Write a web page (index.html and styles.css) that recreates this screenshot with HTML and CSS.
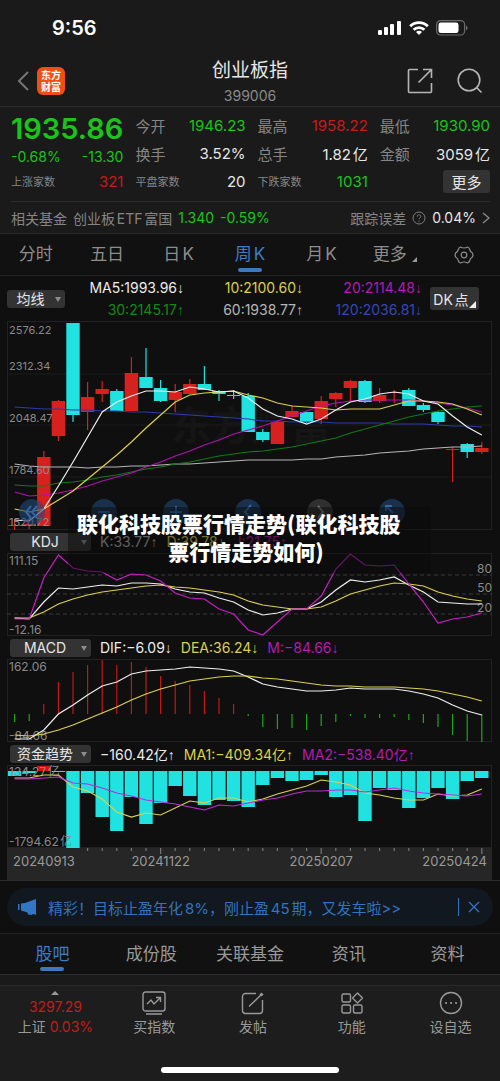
FILE: index.html
```html
<!DOCTYPE html>
<html lang="zh-CN">
    <head>
        <meta charset="UTF-8">
        <meta name="viewport" content="width=device-width, initial-scale=1.0">
        <title>创业板指 399006</title>
        <link rel="stylesheet" href="styles.css">
    </head>

    <body>
        <div class="status-bar">
            <span class="clock">9:56</span>
            <div class="status-icons">
                <svg width="24" height="16" viewBox="0 0 24 16" fill="#fff">
                    <rect x="0" y="10" width="4" height="5" rx="1"/>
                    <rect x="6" y="7" width="4" height="8" rx="1"/>
                    <rect x="12" y="4" width="4" height="11" rx="1"/>
                    <rect x="19" y="1" width="4" height="14" rx="1"/>
                </svg>
                <svg width="20" height="16" viewBox="0 0 20 16" fill="none" stroke="#fff" stroke-width="2.8">
                    <path d="M1.2 6.2a12.4 12.4 0 0 1 17.6 0"/>
                    <path d="M4.6 9.8a7.6 7.6 0 0 1 10.8 0"/>
                    <path d="M10 15l-3-3a4.2 4.2 0 0 1 6 0z" fill="#fff" stroke="none"/>
                </svg>
                <svg width="32" height="16" viewBox="0 0 32 16">
                    <rect x="0.6" y="0.6" width="28" height="14.4" rx="4" fill="none" stroke="#6b6b6b" stroke-width="1.2"/>
                    <rect x="2.5" y="2.5" width="20" height="10.6" rx="2.4" fill="#fff"/>
                    <path d="M30 5.4c2 .8 2 4 0 4.8z" fill="#6b6b6b"/>
                </svg>
            </div>
        </div>

        <header class="top-bar">
            <div class="top-side">
                <button class="icon-btn" aria-label="返回">
                    <svg width="12" height="20" viewBox="0 0 12 20" fill="none" stroke="#757575" stroke-width="2"><path d="M11 1L2 10l9 9"/></svg>
                </button>
                <a class="logo" href="#">东方<br>财富</a>
            </div>
            <div class="top-title">
                <h1>创业板指</h1>
                <p>399006</p>
            </div>
            <div class="top-side top-right">
                <button class="icon-btn" aria-label="分享">
                    <svg width="26" height="26" viewBox="0 0 26 26" fill="none" stroke="#b5b5b5" stroke-width="1.6"><path d="M11 1.500H2.500a1 1 0 0 0-1 1v21a1 1 0 0 0 1 1h21a1 1 0 0 0 1-1V15M16 1.500h8.500V10M24.500 1.500L11.500 14.500"/></svg>
                </button>
                <button class="icon-btn" aria-label="搜索">
                    <svg width="26" height="26" viewBox="0 0 26 26" fill="none" stroke="#b5b5b5" stroke-width="1.6"><circle cx="12" cy="12" r="10.800"/><path d="M19.500 19.500l5 5"/></svg>
                </button>
            </div>
        </header>

        <section class="quote">
            <div class="quote-grid">
                <div class="col">
                    <div class="row price down">1935.86</div>
                    <div class="row change down"><span>-0.68%</span><span>-13.30</span></div>
                    <div class="row"><span class="small">上涨家数</span><span class="up">321</span></div>
                </div>
                <div class="col">
                    <div class="row"><span class="label">今开</span><span class="down">1946.23</span></div>
                    <div class="row"><span class="label">换手</span><span>3.52%</span></div>
                    <div class="row"><span class="small">平盘家数</span><span>20</span></div>
                </div>
                <div class="col">
                    <div class="row"><span class="label">最高</span><span class="up">1958.22</span></div>
                    <div class="row"><span class="label">总手</span><span>1.82亿</span></div>
                    <div class="row"><span class="small">下跌家数</span><span class="down">1031</span></div>
                </div>
                <div class="col">
                    <div class="row"><span class="label">最低</span><span class="down">1930.90</span></div>
                    <div class="row"><span class="label">金额</span><span>3059亿</span></div>
                    <div class="row row-end"><button class="more">更多</button></div>
                </div>
            </div>
            <div class="related">
                <span>相关基金</span>
                <span>创业板ETF富国</span>
                <span class="down">1.340</span>
                <span class="down">-0.59%</span>
                <span class="push">跟踪误差</span>
                <svg width="14" height="14" viewBox="0 0 14 14" fill="none" stroke="#7d7d7d"><circle cx="7" cy="7" r="6"/><path d="M5.200 5.600c0-2.400 3.600-2.400 3.600 0 0 1.300-1.800 1.300-1.800 2.700M7 9.500v1.200"/></svg>
                <span class="white">0.04%</span>
                <svg width="8" height="12" viewBox="0 0 8 12" fill="none" stroke="#8a8a8a" stroke-width="1.400"><path d="M1 1l6 5-6 5"/></svg>
            </div>
        </section>

        <nav class="period-tabs">
            <a href="#">分时</a>
            <a href="#">五日</a>
            <a href="#">日K</a>
            <a href="#" class="active">周K</a>
            <a href="#">月K</a>
            <a href="#" class="has-corner">更多</a>
            <button class="icon-btn" aria-label="设置">
                <svg width="20" height="20" viewBox="0 0 20 20" fill="none" stroke="#8c8c8c" stroke-width="1.200" stroke-linejoin="round"><path d="M6.500 2Q10 4 13.500 2Q15.200 2.400 15.700 4.500Q16.200 6.800 18.400 8Q19.400 10 18.400 12Q16.200 13.200 15.700 15.500Q15.200 17.600 13.500 18Q10 16 6.500 18Q4.800 17.600 4.300 15.500Q3.800 13.200 1.600 12Q.6 10 1.600 8Q3.800 6.800 4.300 4.500Q4.800 2.400 6.500 2z"/><circle cx="10" cy="10" r="2.800"/></svg>
            </button>
        </nav>

        <main class="charts">
            <div class="ma-row">
                <div class="picker picker-small">
                    <select aria-label="主图指标"><option>均线</option></select>
                </div>
                <div class="ma-values">
                    <span class="c-white">MA5:1993.96<i>↓</i></span>
                    <span class="c-yellow">10:2100.60<i>↓</i></span>
                    <span class="c-pink">20:2114.48<i>↓</i></span>
                    <span class="c-green">30:2145.17<i>↑</i></span>
                    <span class="c-grey">60:1938.77<i>↑</i></span>
                    <span class="c-blue">120:2036.81<i>↓</i></span>
                </div>
                <button class="dk">DK点</button>
            </div>

            <div class="panel">
                <svg id="kline" class="chart" viewBox="0 0 485 209"></svg>
                <div class="chart-tools">
                    <button aria-label="最左"><svg viewBox="0 0 26 26"><path d="M12 7l-5 6 5 6M18 7l-5 6 5 6"/></svg></button>
                    <button aria-label="缩小"><svg viewBox="0 0 26 26"><path d="M7 13h12"/></svg></button>
                    <button aria-label="放大"><svg viewBox="0 0 26 26"><path d="M7 13h12M13 7v12"/></svg></button>
                    <button aria-label="左移"><svg viewBox="0 0 26 26"><path d="M16 6l-6 7 6 7"/></svg></button>
                    <button aria-label="右移" class="off"><svg viewBox="0 0 26 26"><path d="M11 7l5 6-5 6"/></svg></button>
                    <button aria-label="全屏"><svg viewBox="0 0 26 26"><path d="M7 12V7h6M7 7l7 7"/></svg></button>
                </div>
            </div>

            <div class="panel">
                <div class="panel-head">
                    <div class="picker"><select aria-label="副图一"><option>KDJ</option></select></div>
                    <span class="c-grey">K:33.77<i>↑</i></span>
                    <span class="c-yellow">D:39.78<i>↓</i></span>
                    <span class="c-pink">J:21.75<i>↑</i></span>
                </div>
                <svg id="kdj" class="chart" viewBox="0 0 485 83"></svg>
                <p class="caption">联化科技股票行情走势(联化科技股票行情走势如何)</p>
            </div>

            <div class="panel">
                <div class="panel-head">
                    <div class="picker"><select aria-label="副图二"><option>MACD</option></select></div>
                    <span class="c-white">DIF:−6.09<i>↓</i></span>
                    <span class="c-yellow">DEA:36.24<i>↓</i></span>
                    <span class="c-pink">M:−84.66<i>↓</i></span>
                </div>
                <svg id="macd" class="chart" viewBox="0 0 485 83"></svg>
            </div>

            <div class="panel">
                <div class="panel-head">
                    <div class="picker"><select aria-label="副图三"><option>资金趋势</option></select></div>
                    <span class="c-white">−160.42亿<i>↑</i></span>
                    <span class="c-yellow">MA1:−409.34亿<i>↑</i></span>
                    <span class="c-pink">MA2:−538.40亿<i>↑</i></span>
                </div>
                <svg id="fund" class="chart" viewBox="0 0 485 83"></svg>
                <svg id="axis" class="chart axis" viewBox="0 0 485 32"></svg>
            </div>
        </main>

        <div class="promo-wrap">
            <div class="promo">
                <svg width="20" height="16" viewBox="0 0 20 16" fill="#3377c4"><path d="M0 5h1.500v6H0zM3 4.500l4-.5 11-4v16l-3-1.200-1 1.200-4-.5-.5-2L3 11.500z"/></svg>
                <a href="#">精彩！目标止盈年化8%，刚止盈45期，又发车啦&gt;&gt;</a>
                <button class="icon-btn" aria-label="关闭">
                    <svg width="12" height="12" viewBox="0 0 12 12" stroke="#3377c4" stroke-width="1.300"><path d="M1 1l10 10M11 1L1 11"/></svg>
                </button>
            </div>
        </div>

        <nav class="info-tabs">
            <a href="#" class="active">股吧</a>
            <a href="#">成份股</a>
            <a href="#">关联基金</a>
            <a href="#">资讯</a>
            <a href="#">资料</a>
        </nav>

        <footer class="bottom-bar">
            <div class="bottom-items">
                <a href="#" class="index">
                    <svg width="8" height="4" viewBox="0 0 8 4" fill="#999"><path d="M0 4l4-4 4 4z"/></svg>
                    <span class="up">3297.29</span>
                    <span>上证 <b class="up">0.03%</b></span>
                </a>
                <a href="#">
                    <svg width="24" height="24" viewBox="0 0 24 24"><rect x="1" y="1" width="22" height="19" rx="2.500"/><path d="M4 23h16M5 13l4-4 3 4 6-6M14 6.500h4.500V11"/></svg>
                    <span>买指数</span>
                </a>
                <a href="#">
                    <svg width="24" height="24" viewBox="0 0 24 24"><path d="M15 2.500H4.500a3 3 0 0 0-3 3v14a3 3 0 0 0 3 3h14a3 3 0 0 0 3-3V9M8 15.500L20.500 3.500" /><path d="M19.500 4.500l2-2" stroke-width="3"/></svg>
                    <span>发帖</span>
                </a>
                <a href="#">
                    <svg width="24" height="24" viewBox="0 0 24 24"><rect x="2" y="3" width="8.500" height="8" rx="1.500"/><rect x="2" y="14" width="8.500" height="8" rx="1.500"/><rect x="13.500" y="14" width="8.500" height="8" rx="1.500"/><path d="M17.500 2l5 5-5 5-5-5z" stroke-linejoin="round"/></svg>
                    <span>功能</span>
                </a>
                <a href="#">
                    <svg width="24" height="24" viewBox="0 0 24 24"><circle cx="12" cy="12" r="10.500"/><path d="M7 12h.1M12 12h.1M17 12h.1" stroke-width="2" stroke-linecap="round"/></svg>
                    <span>设自选</span>
                </a>
            </div>
            <div class="home-bar"></div>
        </footer>

        <script>
            const STEP = 14.6;
            const FIRST = 7.6;
            const BAR = 13.4;
            const RED = '#d7211f';
            const CYAN = '#20e2e0';

            const x = i => FIRST + i * STEP;

            function line(ys, color) {
                const points = ys.map((y, i) => `${x(i).toFixed(1)},${y}`).join(' ');
                return `<polyline points="${points}" fill="none" stroke="${color}" stroke-width="1.2"/>`;
            }

            function rect(i, top, bottom, color) {
                return `<rect x="${(x(i) - BAR / 2).toFixed(1)}" y="${top}" width="${BAR}" height="${bottom - top}" fill="${color}"/>`;
            }

            function stick(i, top, bottom, color) {
                return `<line x1="${x(i).toFixed(1)}" x2="${x(i).toFixed(1)}" y1="${top}" y2="${bottom}" stroke="${color}" stroke-width="1.2"/>`;
            }

            function label(px, y, text, cls = '') {
                return `<text x="${px}" y="${y}" class="${cls}">${text}</text>`;
            }

            function rule(y, cls) {
                return `<line x1="0" x2="485" y1="${y}" y2="${y}" class="${cls}"/>`;
            }

            function frame(h) {
                return `<rect x="0.5" y="0.5" width="484" height="${h - 1}" class="frame"/>`;
            }

            // top, bottom, high, low, rising
            const candles = [
                [204, 205, 198, 209, 1], [203, 205, 203, 208, 1], [136, 205, 130, 205, 1], [80, 115, 79, 120, 1],
                [2, 94, 2, 101, 0], [76, 91, 61, 109, 1], [68, 73, 60, 81, 1], [70, 90, 68, 90, 0],
                [52, 90, 36, 90, 1], [56, 67, 27, 67, 0], [67, 80, 59, 81, 0], [71, 79, 63, 91, 1],
                [63, 73, 58, 73, 1], [63, 69, 45, 69, 0], [70, 73, 69, 80, 0], [74, 75, 69, 78, 0],
                [75, 111, 72, 111, 0], [111, 119, 108, 121, 0], [101, 123, 99, 123, 1], [90, 96, 84, 96, 1],
                [91, 101, 91, 102, 0], [80, 98, 75, 103, 1], [72, 78, 71, 86, 1], [60, 67, 59, 80, 1],
                [60, 81, 59, 82, 0], [74, 80, 67, 82, 1], [71, 72, 69, 82, 1], [69, 85, 67, 85, 0],
                [84, 89, 82, 91, 0], [91, 101, 90, 103, 0], [128, 129, 126, 161, 1], [123, 131, 122, 137, 0],
                [127, 131, 121, 133, 1]
            ];

            const ma = [
                ['#2b3bb0', [86,87,88,88,89,89,90,90,91,91,92,93,94,95,96,97,98,100,100,101,101,101,102,102,102,102,103,103,103,104,105,105,106]],
                ['#b5b5b5', [143,145,146,146,146,147,146,146,145,145,144,143,143,142,141,140,139,139,139,139,138,138,136,135,134,132,131,130,128,127,126,126,125]],
                ['#107a14', [164,165,165,162,161,159,156,154,151,148,146,143,141,138,135,133,131,130,128,126,123,120,117,112,108,104,100,96,93,90,88,86,85]],
                ['#b010b0', [171,175,174,172,169,165,160,156,152,146,141,135,130,124,119,113,109,105,100,95,90,85,82,80,79,79,79,79,80,82,84,87,91]],
                ['#ded04c', [188,191,188,179,170,158,146,134,121,107,94,81,74,72,71,70,74,77,82,85,86,87,89,88,88,88,84,80,80,81,83,88,94]],
                ['#f0f0f0', [199,200,188,165,141,116,91,81,75,70,70,71,66,68,71,70,77,88,95,98,103,98,89,81,78,73,71,73,80,83,95,106,114]]
            ];

            let kline = frame(209) + rule(53, 'grid') + rule(104, 'grid') + rule(156, 'grid');
            kline += label(164, 119, '东方财富', 'watermark');
            candles.forEach(([top, bottom, high, low, rising], i) => {
                const color = rising ? RED : CYAN;
                kline += stick(i, high, low, color) + rect(i, top, bottom, color);
            });
            ma.forEach(([color, ys]) => kline += line(ys, color));
            kline += label(2, 13, '2576.22', 'price-label') + label(2, 49, '2312.34', 'price-label');
            kline += label(2, 101, '2048.47', 'price-label') + label(2, 153, '1784.60', 'price-label');
            kline += label(2, 205, '1520.72', 'price-label');
            document.getElementById('kline').innerHTML = kline;

            let kdj = frame(83) + rule(22, 'dash') + rule(41, 'dash') + rule(61, 'dash');
            kdj += label(2, 12, '111.15') + label(2, 81, '-12.16');
            kdj += label(485, 20, '80', 'end') + label(485, 39, '50', 'end') + label(485, 59, '20', 'end');
            kdj += line([65,66,49,35,36,34,32,33,30,30,31,36,39,40,45,49,57,62,60,56,56,49,37,27,29,27,24,32,39,49,50,51,51], '#f0f0f0');
            kdj += line([65,65,59,51,46,42,39,37,35,33,32,34,35,37,39,42,48,52,54,56,56,54,48,41,37,33,30,31,33,39,43,46,48], '#ded04c');
            kdj += line([66,66,25,2,15,18,19,27,21,22,28,40,45,46,56,61,77,82,69,56,56,43,16,1,12,13,12,31,49,70,66,64,60], '#c81ec8');
            document.getElementById('kdj').innerHTML = kdj;

            const ZERO = 55;
            let macd = frame(83);
            [63,62,45,23,13,6,1,6,3,8,17,22,26,32,39,45,57,68,70,69,71,67,63,57,59,59,58,61,64,68,76,82,83].forEach((y, i) => {
                macd += stick(i, Math.min(y, ZERO), Math.max(y, ZERO), y < ZERO ? '#c01818' : '#1fa51f');
            });
            macd += label(2, 12, '162.06') + label(2, 81, '-84.66');
            macd += line([80,80,71,55,46,36,27,23,15,12,11,10,8,9,10,12,18,25,28,30,32,32,31,29,30,30,30,32,35,39,46,52,56], '#f0f0f0');
            macd += line([76,77,75,71,66,60,54,48,41,35,30,26,22,20,18,17,17,19,20,22,24,26,27,27,28,28,28,29,30,32,35,38,42], '#ded04c');
            document.getElementById('macd').innerHTML = macd;

            let fund = frame(83);
            [11,8,1,7,83,28,52,66,32,59,38,21,31,40,35,36,42,20,13,16,15,10,32,30,56,23,25,43,33,23,34,16,13].forEach((y, i) => {
                fund += y < 6 ? rect(i, y, 6, '#e01010') : rect(i, 6, y, CYAN);
            });
            fund += label(2, 11, '134.27亿') + label(2, 81, '-1794.62亿');
            fund += line([13,13,10,10,22,26,34,47,52,48,50,43,36,38,33,33,37,34,29,25,21,15,17,20,28,30,33,35,35,29,31,30,24], '#ded04c');
            fund += line([14,14,13,12,18,19,23,28,31,35,37,39,42,45,40,41,38,35,33,29,26,26,25,25,27,25,23,26,28,29,30,31,29], '#c02ad8');
            document.getElementById('fund').innerHTML = fund;

            let axis = '';
            for (let i = 5; i < 33; i++) {
                axis += stick(i, 0, (i + 1) % 11 === 0 ? 6 : 3, '#777');
            }
            axis += label(6, 18, '20240913') + label(x(10), 18, '20241122', 'mid');
            axis += label(x(21), 18, '20250207', 'mid') + label(480, 18, '20250424', 'end');
            document.getElementById('axis').innerHTML = axis;
        </script>
    </body>
</html>
```
FILE: styles.css
```css
* {
    box-sizing: border-box;
}
body {
    margin: 0;
    background: #1a1a1a;
    color: #e6e6e6;
    font-family: Inter, "Noto Sans CJK SC", sans-serif;
    font-size: 14px;
    text-autospace: normal;
}
a {
    color: inherit;
    text-decoration: none;
}
button, select {
    font: inherit;
    color: inherit;
    border: none;
    padding: 0;
    margin: 0;
    cursor: pointer;
}
svg {
    display: block;
}
i, b {
    font-style: normal;
    font-weight: 400;
}
.icon-btn {
    background: none;
    display: flex;
    align-items: center;
    justify-content: center;
}
.up {
    color: #c81a1a;
}
.down {
    color: #1ac41a;
}

/* status bar + title */
.status-bar {
    height: 56px;
    padding: 0 32px 0 52px;
    display: flex;
    align-items: center;
    justify-content: space-between;
}
.clock {
    color: #fff;
    font-size: 20px;
    font-weight: 600;
}
.status-icons {
    display: flex;
    gap: 7px;
}
.top-bar {
    height: 51px;
    padding: 0 17px;
    display: flex;
    justify-content: space-between;
    align-items: center;
    border-bottom: 1px solid #2b2b2b;
}
.top-side {
    width: 76px;
    display: flex;
    align-items: center;
    gap: 8px;
}
.top-right {
    justify-content: flex-end;
    gap: 24px;
}
.logo {
    width: 28px;
    height: 28px;
    padding-top: 2px;
    border-radius: 6px;
    background: #f04e12;
    color: #fff;
    font-size: 10px;
    font-weight: 700;
    line-height: 12px;
    text-align: center;
}
.top-title {
    text-align: center;
}
.top-title h1 {
    margin: 0;
    font-size: 19px;
    font-weight: 400;
    line-height: 30px;
}
.top-title p {
    margin: 0;
    color: #8a8a8a;
    line-height: 20px;
}

/* quote */
.quote {
    padding: 4px 10px 0 11px;
    border-bottom: 1px solid #262626;
}
.quote-grid {
    display: grid;
    grid-template-columns: repeat(4, 1fr);
    gap: 12px;
    height: 90px;
    font-size: 15px;
}
.row {
    height: 28px;
    display: flex;
    align-items: center;
    justify-content: space-between;
}
.row-end {
    justify-content: flex-end;
}
.price {
    height: 34px;
    font-size: 29px;
    font-weight: 600;
}
.change {
    height: 22px;
    font-size: 14px;
}
.label {
    color: #858585;
}
.small {
    font-size: 11px;
    color: #858585;
}
.more {
    width: 47px;
    height: 23px;
    border-radius: 3px;
    background: #333;
}
.related {
    height: 32px;
    border-top: 1px solid #2b2b2b;
    display: flex;
    align-items: center;
    gap: 6px;
    color: #858585;
    white-space: nowrap;
}
.push {
    margin-left: auto;
}
.white {
    color: #e6e6e6;
}

/* period tabs */
.period-tabs {
    height: 42px;
    display: grid;
    grid-template-columns: repeat(7, 1fr);
    background: #111;
    border-bottom: 1px solid #222;
    color: #8c8c8c;
    font-size: 17px;
    line-height: 40px;
    text-align: center;
}
.period-tabs a, .info-tabs a {
    position: relative;
}
.period-tabs .has-corner {
    padding-right: 6px;
}
.active {
    color: #3c7cc8;
}
.active::after {
    content: "";
    position: absolute;
    left: 50%;
    bottom: 3px;
    width: 24px;
    height: 4px;
    margin-left: -12px;
    border-radius: 2px;
    background: #3f78bd;
}
.has-corner::after {
    content: "";
    position: absolute;
    right: 12px;
    bottom: 13px;
    border-left: 5px solid transparent;
    border-bottom: 5px solid #999;
}

/* charts */
.charts {
    background: #0f0f0f;
    padding: 0 8px 0 7px;
}
.c-white { color: #ececec; }
.c-grey { color: #b5b5b5; }
.c-yellow { color: #ded04c; }
.c-pink { color: #b41ab4; }
.c-green { color: #128a16; }
.c-blue { color: #3846b8; }
.ma-row {
    height: 45px;
    display: flex;
    align-items: center;
    padding-right: 13px;
}
.ma-values {
    flex: 1;
    display: grid;
    grid-template-columns: repeat(3, 1fr);
    margin-right: 8px;
    line-height: 22px;
    text-align: right;
}
.ma-values i, .panel-head i {
    font-family: "Liberation Sans", sans-serif;
    line-height: 1;
}
.picker {
    position: relative;
    width: 81px;
    height: 18px;
}
.picker select {
    appearance: none;
    width: 100%;
    height: 100%;
    padding-right: 11px;
    border-radius: 3px;
    background: #333;
    line-height: 18px;
    text-align-last: center;
}
.picker::after {
    content: "";
    position: absolute;
    right: 4px;
    top: 7px;
    border: 3px solid transparent;
    border-top: 5px solid #8c8c8c;
    border-bottom: none;
}
.picker-small {
    width: 58px;
}
.dk {
    position: relative;
    width: 49px;
    height: 23px;
    padding-right: 7px;
    border-radius: 3px;
    background: #333;
}
.dk::after {
    content: "";
    position: absolute;
    right: 3px;
    bottom: 2px;
    border-left: 7px solid transparent;
    border-bottom: 7px solid #eee;
}
.panel {
    position: relative;
}
.panel-head {
    height: 23px;
    padding-left: 3px;
    display: flex;
    align-items: center;
    gap: 9px;
    white-space: nowrap;
    text-autospace: no-autospace;
}
.chart {
    width: 100%;
}
.chart text {
    font-size: 12px;
    fill: #8a8a8a;
}
.chart .price-label {
    font-size: 11px;
}
.chart .end {
    text-anchor: end;
}
.chart .mid {
    text-anchor: middle;
}
.chart .watermark {
    font-size: 40px;
    font-weight: 700;
    fill: #151515;
}
.frame {
    fill: none;
    stroke: #222;
}
.grid {
    stroke: #1c1c1c;
}
.dash {
    stroke: #3a3a3a;
    stroke-dasharray: 4 3;
}
.axis {
    background: #262626;
}
.axis text {
    font-size: 13px;
    fill: #999;
}
.chart-tools {
    position: absolute;
    left: 12px;
    bottom: 5px;
    display: flex;
    gap: 46px;
}
.chart-tools button {
    width: 26px;
    height: 26px;
    border-radius: 50%;
    background: rgba(32, 72, 118, 0.6);
}
.chart-tools .off {
    background: rgba(70, 70, 70, 0.6);
}
.chart-tools svg {
    fill: none;
    stroke: #2f67a8;
    stroke-width: 2;
}
.chart-tools .off svg {
    stroke: #777;
}
.caption {
    position: absolute;
    left: 61px;
    top: -23px;
    width: 363px;
    margin: 0;
    padding: 2px 16px 8px 9px;
    background: rgba(10, 10, 10, 0.5);
    color: #fff;
    font-family: "Noto Sans CJK SC", sans-serif;
    font-size: 21px;
    font-weight: 900;
    line-height: 28px;
    text-align-last: center;
}

/* promo */
.promo-wrap {
    padding: 7px 7px;
    background: #0f0f0f;
    border-top: 1px solid #2b2b2b;
    border-bottom: 1px solid #222;
}
.promo {
    height: 38px;
    padding: 0 13px 0 11px;
    display: flex;
    align-items: center;
    gap: 10px;
    border-radius: 19px;
    background: #111820;
    color: #3373bd;
    font-size: 15px;
    white-space: nowrap;
}
.promo button {
    margin-left: auto;
    height: 18px;
    padding-left: 9px;
    border-left: 1px solid #3373bd;
}

/* bottom */
.info-tabs {
    height: 41px;
    display: grid;
    grid-template-columns: repeat(5, 1fr);
    padding: 0 3px;
    background: #111;
    border-bottom: 1px solid #2b2b2b;
    color: #999;
    font-size: 17px;
    line-height: 40px;
    text-align: center;
}
.bottom-bar {
    margin-top: 10px;
    padding: 5px 0 9px;
    background: #1d1d1d;
    border-top: 1px solid #2b2b2b;
}
.bottom-items {
    height: 76px;
    padding-left: 6px;
    display: grid;
    grid-template-columns: repeat(5, 1fr);
}
.bottom-items a {
    display: flex;
    flex-direction: column;
    align-items: center;
    color: #999;
    line-height: 20px;
    white-space: nowrap;
}
.bottom-items svg {
    margin-bottom: 2px;
}
.bottom-items a:not(.index) svg {
    fill: none;
    stroke: #999;
    stroke-width: 1.4;
}
.home-bar {
    width: 178px;
    height: 6px;
    margin: 0 auto;
    border-radius: 3px;
    background: #fff;
}
```
